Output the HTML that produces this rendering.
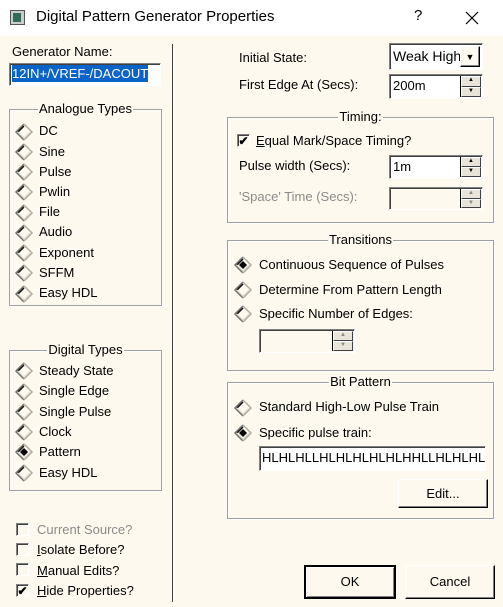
<!DOCTYPE html>
<html><head><meta charset="utf-8"><style>
*{margin:0;padding:0;box-sizing:border-box}
body{width:503px;height:607px;overflow:hidden;background:#fdf9ee;font-family:"Liberation Sans",Arial,sans-serif;font-size:13px;color:#000;position:relative}
.a{position:absolute;white-space:nowrap}
.t{line-height:16px}
.title{position:absolute;left:0;top:0;width:503px;height:36px;background:#fff}
.grp{position:absolute;border:1px solid #a0a0a0;box-shadow:inset 1px 1px 0 #fff,1px 1px 0 #fff}
.gl{position:absolute;top:-9px;left:0;right:0;text-align:center;line-height:16px}
.gl span{background:#fdf9ee;padding:0 1px}
.inp{position:absolute;background:#fff;border:1px solid;border-color:#808080 #fff #fff #808080;box-shadow:inset 1px 1px 0 #404040;line-height:20px;padding-left:3px;overflow:hidden;white-space:nowrap}
.dis{background:#fdf9ee}
.spin{position:absolute;width:21px;background:#fdf9ee;border-left:1px solid #000}
.spin div{position:absolute;left:0;right:0;height:50%;border:1px solid;border-color:#fff #404040 #404040 #fff;background:#e8e4da;font-size:6px;line-height:7px;text-align:center;overflow:hidden}
.btn{position:absolute;border:1px solid;border-color:#fff #000 #000 #fff;box-shadow:inset -1px -1px 0 #808080;background:#fdf9ee;text-align:center}
.cb{position:absolute;width:13px;height:13px;border:1px solid;border-color:#808080 #fff #fff #808080;box-shadow:inset 1px 1px 0 #404040;background:#fdf9ee;font-size:12px;line-height:12px;text-align:center;font-weight:bold}
.gray{color:#8a8a8a}
u{text-decoration:underline}
</style></head><body>
<div class="title"></div>
<svg class="a" style="left:10px;top:10px" width="16" height="16"><rect x="0.5" y="0.5" width="14" height="14" fill="#ccc" stroke="#555"/><rect x="3" y="3" width="8" height="9" fill="#2f6d5b"/></svg>
<div class="a" style="left:36px;top:8px;font-size:15px;line-height:18px">Digital Pattern Generator Properties</div>
<div class="a" style="left:414px;top:7px;font-size:15px">?</div>
<svg class="a" style="left:465px;top:11px" width="14" height="14"><path d="M1 1L13 13M13 1L1 13" stroke="#000" stroke-width="1.2"/></svg>

<svg class="a" style="left:0;top:0" width="503" height="607">
<defs>
<g id="r"><path d="M9 1L1 9L9 17" fill="none" stroke="#707070" stroke-width="1.5"/><path d="M9 3L3 9" stroke="#101010" fill="none" stroke-width="1.5"/><path d="M9 1L17 9L9 17" fill="none" stroke="#b0aca0" stroke-width="1.5"/><path d="M3 9L9 15L15 9" stroke="#e0dcd0" fill="none" stroke-width="1.2"/></g>
<g id="rs"><use href="#r"/><path d="M9 5L13 9L9 13L5 9Z" fill="#000"/></g>
</defs>
<g transform="translate(15,123)"><use href="#r"/></g>
<g transform="translate(15,143)"><use href="#r"/></g>
<g transform="translate(15,163)"><use href="#r"/></g>
<g transform="translate(15,183)"><use href="#r"/></g>
<g transform="translate(15,204)"><use href="#r"/></g>
<g transform="translate(15,224)"><use href="#r"/></g>
<g transform="translate(15,244)"><use href="#r"/></g>
<g transform="translate(15,264)"><use href="#r"/></g>
<g transform="translate(15,285)"><use href="#r"/></g>
<g transform="translate(15,362)"><use href="#r"/></g>
<g transform="translate(15,383)"><use href="#r"/></g>
<g transform="translate(15,403)"><use href="#r"/></g>
<g transform="translate(15,423)"><use href="#r"/></g>
<g transform="translate(15,443)"><use href="#rs"/></g>
<g transform="translate(15,464)"><use href="#r"/></g>
<g transform="translate(234,256)"><use href="#rs"/></g>
<g transform="translate(234,281)"><use href="#r"/></g>
<g transform="translate(234,305)"><use href="#r"/></g>
<g transform="translate(234,399)"><use href="#r"/></g>
<g transform="translate(234,424)"><use href="#rs"/></g>
</svg>

<div class="a t" style="left:12px;top:44px">Generator Name:</div>
<div class="inp" style="left:9px;top:63px;width:152px;height:23px;padding-left:2px"><span style="background:#0a64c8;color:#fff;line-height:17px;display:inline-block">12IN+/VREF-/DACOUT</span></div>

<div class="a" style="left:172px;top:44px;width:2px;height:558px;background:#404040;border-right:1px solid #fff"></div>

<div class="grp" style="left:9px;top:109px;width:153px;height:197px"><div class="gl"><span>Analogue Types</span></div></div>
<div class="grp" style="left:9px;top:350px;width:153px;height:141px"><div class="gl"><span>Digital Types</span></div></div>

<div class="a t" style="left:39px;top:123px">DC</div>
<div class="a t" style="left:39px;top:144px">Sine</div>
<div class="a t" style="left:39px;top:164px">Pulse</div>
<div class="a t" style="left:39px;top:184px">Pwlin</div>
<div class="a t" style="left:39px;top:204px">File</div>
<div class="a t" style="left:39px;top:224px">Audio</div>
<div class="a t" style="left:39px;top:245px">Exponent</div>
<div class="a t" style="left:39px;top:265px">SFFM</div>
<div class="a t" style="left:39px;top:285px">Easy HDL</div>

<div class="a t" style="left:39px;top:363px">Steady State</div>
<div class="a t" style="left:39px;top:383px">Single Edge</div>
<div class="a t" style="left:39px;top:404px">Single Pulse</div>
<div class="a t" style="left:39px;top:424px">Clock</div>
<div class="a t" style="left:39px;top:444px">Pattern</div>
<div class="a t" style="left:39px;top:465px">Easy HDL</div>

<div class="cb" style="left:16px;top:523px"></div><div class="a t gray" style="left:37px;top:522px">Current Source?</div>
<div class="cb" style="left:16px;top:543px"></div><div class="a t" style="left:37px;top:542px"><u>I</u>solate Before?</div>
<div class="cb" style="left:16px;top:563px"></div><div class="a t" style="left:37px;top:563px"><u>M</u>anual Edits?</div>
<div class="cb" style="left:16px;top:584px">✔</div><div class="a t" style="left:37px;top:583px"><u>H</u>ide Properties?</div>

<div class="a t" style="left:239px;top:50px">Initial State:</div>
<div class="inp" style="left:389px;top:43px;width:94px;height:27px;line-height:24px;font-size:14px">Weak High</div>
<div class="btn" style="left:460px;top:46px;width:20px;height:21px;font-size:9px;line-height:20px">▼</div>
<div class="a t" style="left:239px;top:77px">First Edge At (Secs):</div>
<div class="inp" style="left:389px;top:74px;width:94px;height:25px;line-height:22px">200m</div>
<div class="spin" style="left:460px;top:76px;height:21px"><div style="top:0">▲</div><div style="top:50%">▼</div></div>

<div class="grp" style="left:227px;top:117px;width:267px;height:106px"><div class="gl"><span>Timing:</span></div></div>
<div class="cb" style="left:237px;top:134px">✔</div><div class="a t" style="left:256px;top:133px"><u>E</u>qual Mark/Space Timing?</div>
<div class="a t" style="left:239px;top:158px">Pulse width (Secs):</div>
<div class="inp" style="left:389px;top:155px;width:94px;height:24px;line-height:21px">1m</div>
<div class="spin" style="left:460px;top:157px;height:20px"><div style="top:0">▲</div><div style="top:50%">▼</div></div>
<div class="a t gray" style="left:239px;top:189px">'Space' Time (Secs):</div>
<div class="inp dis" style="left:389px;top:187px;width:94px;height:23px"></div>
<div class="spin" style="left:460px;top:189px;height:19px"><div style="top:0;color:#888">▲</div><div style="top:50%;color:#888">▼</div></div>

<div class="grp" style="left:227px;top:240px;width:267px;height:131px"><div class="gl"><span>Transitions</span></div></div>
<div class="a t" style="left:259px;top:257px">Continuous Sequence of Pulses</div>
<div class="a t" style="left:259px;top:282px">Determine From Pattern Length</div>
<div class="a t" style="left:259px;top:306px">Specific Number of Edges:</div>
<div class="inp dis" style="left:259px;top:329px;width:96px;height:24px"></div>
<div class="spin" style="left:332px;top:331px;height:20px"><div style="top:0;color:#888">▲</div><div style="top:50%;color:#888">▼</div></div>

<div class="grp" style="left:227px;top:382px;width:267px;height:137px"><div class="gl"><span>Bit Pattern</span></div></div>
<div class="a t" style="left:259px;top:399px">Standard High-Low Pulse Train</div>
<div class="a t" style="left:259px;top:425px">Specific pulse train:</div>
<div class="inp" style="left:259px;top:446px;width:227px;height:25px;line-height:22px;padding-left:2px">HLHLHLLHLHLHLHLHLHHLLHLHLHLHL</div>
<div class="btn" style="left:398px;top:479px;width:90px;height:29px;line-height:27px">Edit...</div>

<div class="btn" style="left:304px;top:565px;width:92px;height:34px;line-height:30px;border:2px solid #000;box-shadow:inset 1px 1px 0 #fff,inset -1px -1px 0 #808080">OK</div>
<div class="btn" style="left:405px;top:565px;width:90px;height:34px;line-height:32px">Cancel</div>
</body></html>
